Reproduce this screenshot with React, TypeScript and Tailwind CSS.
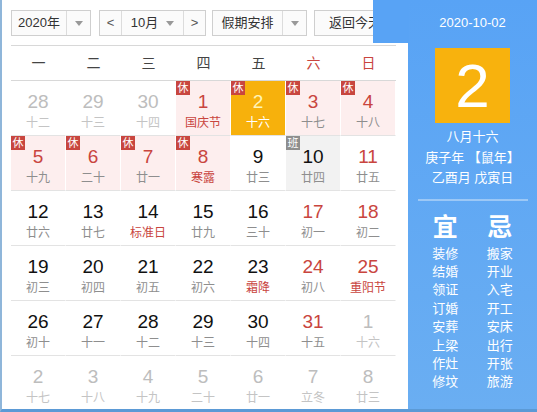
import React from "react";

type Cell = {
  d: string;
  l: string;
  kind?: "gray" | "normal";
  redNum?: boolean;
  redLunar?: boolean;
  rest?: boolean;
  work?: boolean;
  sel?: boolean;
};

const rows: Cell[][] = [
  [
    { d: "28", l: "十二", kind: "gray" },
    { d: "29", l: "十三", kind: "gray" },
    { d: "30", l: "十四", kind: "gray" },
    { d: "1", l: "国庆节", rest: true, redNum: true, redLunar: true },
    { d: "2", l: "十六", rest: true, sel: true },
    { d: "3", l: "十七", rest: true, redNum: true },
    { d: "4", l: "十八", rest: true, redNum: true },
  ],
  [
    { d: "5", l: "十九", rest: true, redNum: true },
    { d: "6", l: "二十", rest: true, redNum: true },
    { d: "7", l: "廿一", rest: true, redNum: true },
    { d: "8", l: "寒露", rest: true, redNum: true, redLunar: true },
    { d: "9", l: "廿三" },
    { d: "10", l: "廿四", work: true },
    { d: "11", l: "廿五", redNum: true },
  ],
  [
    { d: "12", l: "廿六" },
    { d: "13", l: "廿七" },
    { d: "14", l: "标准日", redLunar: true },
    { d: "15", l: "廿九" },
    { d: "16", l: "三十" },
    { d: "17", l: "初一", redNum: true },
    { d: "18", l: "初二", redNum: true },
  ],
  [
    { d: "19", l: "初三" },
    { d: "20", l: "初四" },
    { d: "21", l: "初五" },
    { d: "22", l: "初六" },
    { d: "23", l: "霜降", redLunar: true },
    { d: "24", l: "初八", redNum: true },
    { d: "25", l: "重阳节", redNum: true, redLunar: true },
  ],
  [
    { d: "26", l: "初十" },
    { d: "27", l: "十一" },
    { d: "28", l: "十二" },
    { d: "29", l: "十三" },
    { d: "30", l: "十四" },
    { d: "31", l: "十五", redNum: true },
    { d: "1", l: "十六", kind: "gray" },
  ],
  [
    { d: "2", l: "十七", kind: "gray" },
    { d: "3", l: "十八", kind: "gray" },
    { d: "4", l: "十九", kind: "gray" },
    { d: "5", l: "二十", kind: "gray" },
    { d: "6", l: "廿一", kind: "gray" },
    { d: "7", l: "立冬", kind: "gray" },
    { d: "8", l: "廿三", kind: "gray" },
  ],
];

const cjk = "font-['Liberation_Sans','Noto_Sans_CJK_SC',sans-serif]";

function Arrow() {
  return (
    <svg width="8" height="5" viewBox="0 0 8 5">
      <path d="M0 0 L8 0 L4 5 Z" fill="#999" />
    </svg>
  );
}

function DayCell({ c }: { c: Cell }) {
  let bg = "bg-white";
  if (c.rest) bg = "bg-[#fdeeee]";
  if (c.work) bg = "bg-[#f2f2f2]";
  if (c.sel) bg = "bg-[#f7b10c]";
  let numColor = "text-[#111]";
  let lunColor = "text-[#8e8e8e]";
  if (c.kind === "gray") {
    numColor = "text-[#bdbdbd]";
    lunColor = "text-[#c4c4c4]";
  }
  if (c.redNum) numColor = "text-[#c9453e]";
  if (c.redLunar) lunColor = "text-[#c9453e]";
  if (c.sel) {
    numColor = "text-[#fff4b8]";
    lunColor = "text-white";
  }
  return (
    <div className={`relative h-[55px] border-b border-[#e3e3e3] border-r border-r-white ${bg} flex flex-col items-center`}>
      {c.rest && (
        <span className="absolute left-0 top-0 w-[14px] h-[14px] bg-[#c8463f] text-white text-[11px] leading-[14px] text-center">
          休
        </span>
      )}
      {c.work && (
        <span className="absolute left-0 top-0 w-[14px] h-[14px] bg-[#8e8e8e] text-white text-[11px] leading-[14px] text-center">
          班
        </span>
      )}
      <div className={`mt-[10px] h-[22px] leading-[22px] text-[19px] ${numColor}`}>{c.d}</div>
      <div className={`mt-[2px] h-[16px] leading-[16px] text-[12px] ${lunColor}`}>{c.l}</div>
    </div>
  );
}

export default function App() {
  const weekdays = ["一", "二", "三", "四", "五", "六", "日"];
  const yi = ["装修", "结婚", "领证", "订婚", "安葬", "上梁", "作灶", "修坟"];
  const ji = ["搬家", "开业", "入宅", "开工", "安床", "出行", "开张", "旅游"];
  return (
    <div className={`relative w-[537px] h-[412px] overflow-hidden bg-white border-l-2 border-l-[#8fb6da] border-b-[3px] border-b-[#5b9ad6] flex ${cjk}`}>
      {/* calendar */}
      <div className="w-[406px] shrink-0 pl-[9px]">
        <div className="w-[385px]">
          <div className="flex items-center gap-0 pt-[10px] h-[36px] text-[13px] text-[#333]">
            <div className="flex h-[26px] w-[80px] border border-[#cfcfcf] bg-[#fbfbfb]">
              <div className="w-[55px] flex items-center justify-center border-r border-[#dcdcdc]">2020年</div>
              <div className="flex-1 flex items-center justify-center"><Arrow /></div>
            </div>
            <div className="ml-[8px] flex h-[26px] w-[107px] border border-[#cfcfcf] bg-[#fbfbfb]">
              <div className="w-[22px] flex items-center justify-center border-r border-[#dcdcdc] text-[#555]">&lt;</div>
              <div className="w-[62px] flex items-center justify-center gap-[8px] border-r border-[#dcdcdc]">
                <span>10月</span>
                <Arrow />
              </div>
              <div className="flex-1 flex items-center justify-center text-[#555]">&gt;</div>
            </div>
            <div className="ml-[6px] flex h-[26px] w-[95px] border border-[#cfcfcf] bg-[#fbfbfb]">
              <div className="w-[70px] flex items-center justify-center border-r border-[#dcdcdc]">假期安排</div>
              <div className="flex-1 flex items-center justify-center"><Arrow /></div>
            </div>
            <div className="ml-[7px] flex h-[26px] w-[82px] shrink-0 items-center justify-center border border-[#cfcfcf] bg-[#fbfbfb] whitespace-nowrap">
              返回今天
            </div>
          </div>
          <div className="mt-[9px] grid grid-cols-7 h-[36px] border-t border-b border-[#d8d8d8] items-center text-[14px]">
            {weekdays.map((w, i) => (
              <div key={i} className={`text-center ${i >= 5 ? "text-[#c9453e]" : "text-[#444]"}`}>
                {w}
              </div>
            ))}
          </div>
          <div className="grid grid-cols-7">
            {rows.flat().map((c, i) => (
              <DayCell key={i} c={c} />
            ))}
          </div>
        </div>
      </div>

      {/* blue header extension over toolbar */}
      <div className="absolute left-[371px] top-0 w-[36px] h-[43px] bg-[#58a3f5]" />

      {/* right panel */}
      <div className="flex-1 bg-gradient-to-b from-[#58a3f5] to-[#6aaef2] flex flex-col items-center text-white">
        <div className="h-[43px] flex items-center justify-center text-[13px] font-['Liberation_Sans',sans-serif] pt-[2px]">
          2020-10-02
        </div>
        <div className="mt-[5px] w-[75px] h-[75px] bg-[#f8b20d] flex items-center justify-center text-[62px] leading-none font-['Liberation_Sans',sans-serif]">
          2
        </div>
        <div className="mt-[4px] flex flex-col items-center text-[13px] leading-[20.5px]">
          <div>八月十六</div>
          <div>庚子年 【鼠年】</div>
          <div>乙酉月 戊寅日</div>
        </div>
        <div className="mt-[10px] w-[110px] h-[2px] bg-[#9cc8f6]" />
        <div className="mt-[12px] w-full grid grid-cols-2 px-[10px]">
          <div className="flex flex-col items-center">
            <div className="text-[25px] leading-[28px] font-bold">宜</div>
            <div className="mt-[4px] flex flex-col items-center text-[13px] leading-[18.4px]">
              {yi.map((t) => (
                <div key={t}>{t}</div>
              ))}
            </div>
          </div>
          <div className="flex flex-col items-center">
            <div className="text-[25px] leading-[28px] font-bold">忌</div>
            <div className="mt-[4px] flex flex-col items-center text-[13px] leading-[18.4px]">
              {ji.map((t) => (
                <div key={t}>{t}</div>
              ))}
            </div>
          </div>
        </div>
      </div>
    </div>
  );
}
